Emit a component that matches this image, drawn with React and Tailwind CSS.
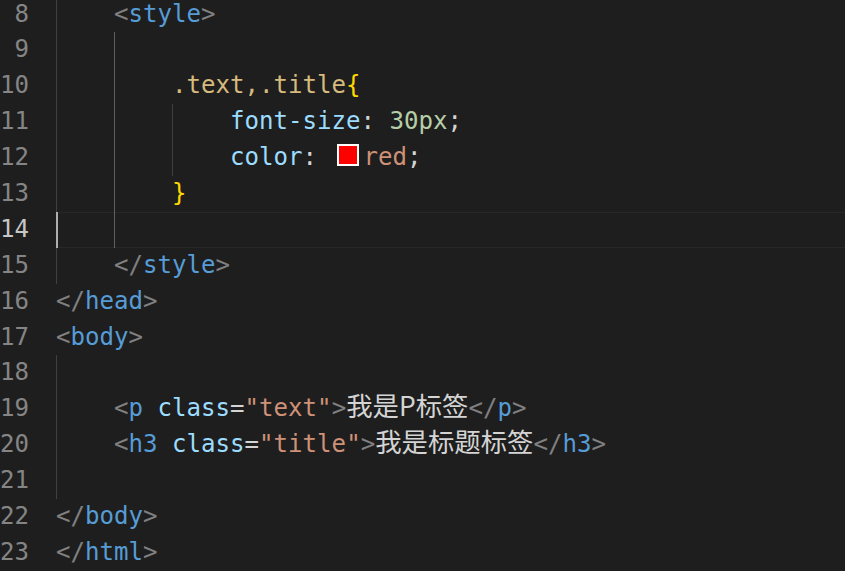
const C = {
  br: "text-[#808080]",
  tag: "text-[#569cd6]",
  attr: "text-[#9cdcfe]",
  str: "text-[#ce9178]",
  sel: "text-[#d7ba7d]",
  brace: "text-[#ffd700]",
  num: "text-[#b5cea8]",
  txt: "text-[#d4d4d4]",
};

const cjk = "font-['Noto_Sans_CJK_SC',sans-serif] text-[26.4px] leading-none";

const lines = [
  { n: 8, guides: [1], code: [["br", "<"], ["tag", "style"], ["br", ">"]] },
  { n: 9, guides: [1, 2], code: [] },
  { n: 10, guides: [1, 2], code: [["sel", ".text,.title"], ["brace", "{"]] },
  {
    n: 11,
    guides: [1, 2, 3],
    code: [["attr", "font-size"], ["txt", ": "], ["num", "30px"], ["txt", ";"]],
  },
  {
    n: 12,
    guides: [1, 2, 3],
    code: [["attr", "color"], ["txt", ": "], ["swatch"], ["str", "red"], ["txt", ";"]],
  },
  { n: 13, guides: [1, 2], code: [["brace", "}"]] },
  { n: 14, guides: [1, 2], code: [], active: true },
  { n: 15, guides: [1], code: [["br", "</"], ["tag", "style"], ["br", ">"]] },
  { n: 16, guides: [], code: [["br", "</"], ["tag", "head"], ["br", ">"]] },
  { n: 17, guides: [], code: [["br", "<"], ["tag", "body"], ["br", ">"]] },
  { n: 18, guides: [1], code: [] },
  {
    n: 19,
    guides: [1],
    code: [
      ["br", "<"],
      ["tag", "p"],
      ["txt", " "],
      ["attr", "class"],
      ["txt", "="],
      ["str", '"text"'],
      ["br", ">"],
      ["cjk", "我是P标签"],
      ["br", "</"],
      ["tag", "p"],
      ["br", ">"],
    ],
  },
  {
    n: 20,
    guides: [1],
    code: [
      ["br", "<"],
      ["tag", "h3"],
      ["txt", " "],
      ["attr", "class"],
      ["txt", "="],
      ["str", '"title"'],
      ["br", ">"],
      ["cjk", "我是标题标签"],
      ["br", "</"],
      ["tag", "h3"],
      ["br", ">"],
    ],
  },
  { n: 21, guides: [1], code: [] },
  { n: 22, guides: [], code: [["br", "</"], ["tag", "body"], ["br", ">"]] },
  { n: 23, guides: [], code: [["br", "</"], ["tag", "html"], ["br", ">"]] },
];

function Token({ t }) {
  const [kind, text] = t;
  if (kind === "swatch") {
    return (
      <span className="inline-block align-middle w-[22px] h-[22px] ml-[5px] mr-[5px] -mt-[6px] border-2 border-white bg-[#ff0000]" />
    );
  }
  if (kind === "cjk") {
    return <span className={`${cjk} text-[#d4d4d4]`}>{text}</span>;
  }
  return <span className={C[kind]}>{text}</span>;
}

function Line({ line }) {
  return (
    <div className="flex h-[35.9px]">
      <div
        className={`w-[29px] shrink-0 text-right leading-[35.9px] ${
          line.active ? "text-[#c6c6c6]" : "text-[#858585]"
        }`}
      >
        {line.n}
      </div>
      <div
        className={`ml-[27px] flex-1 flex ${
          line.active ? "shadow-[inset_0_1px_0_#282828,inset_0_-1px_0_#282828]" : ""
        }`}
      >
        {line.guides.map((g, i) => {
          let cls = "border-l border-[#404040]";
          if (line.active && g === 1) cls = "border-l-2 border-[#aeafad]";
          else if (g === 2 && line.n >= 9 && line.n <= 14) cls = "border-l border-[#5f5f5f]";
          return <span key={i} className={`w-[58px] shrink-0 ${cls}`} />;
        })}
        <div className="whitespace-pre leading-[35.9px]">
          {line.code.map((t, i) => (
            <Token key={i} t={t} />
          ))}
        </div>
      </div>
    </div>
  );
}

export default function App() {
  return (
    <div className="w-[845px] h-[571px] overflow-hidden bg-[#1e1e1e] font-['DejaVu_Sans_Mono',monospace] text-[24.1px]">
      <div className="-mt-[3.5px]">
        {lines.map((line) => (
          <Line key={line.n} line={line} />
        ))}
      </div>
    </div>
  );
}
